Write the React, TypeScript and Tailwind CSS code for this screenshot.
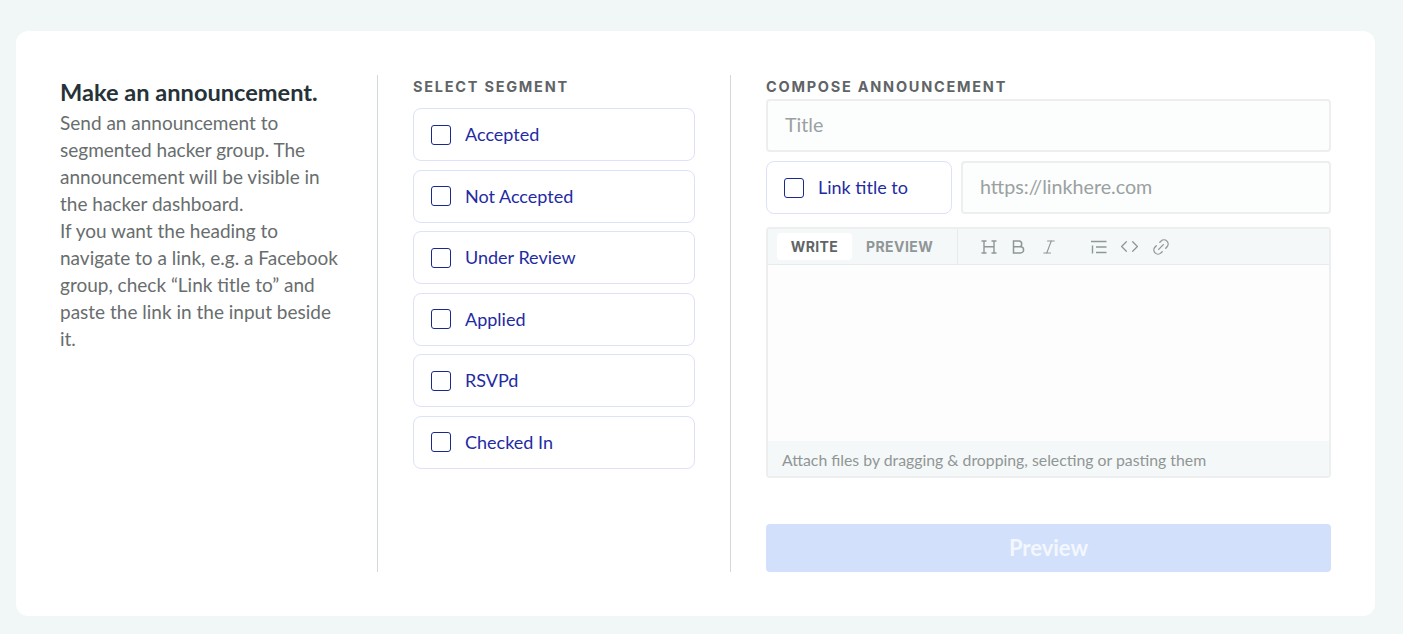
import { Code, Italic, Link2 } from "lucide-react";

const SEGMENTS = ["Accepted", "Not Accepted", "Under Review", "Applied", "RSVPd", "Checked In"];

const bodyFont = "font-['Lato','Noto_Sans',sans-serif]";

function CheckRow({ label, className }: { label: string; className: string }) {
  return (
    <label className={`flex h-[53px] shrink-0 items-center rounded-lg border border-[#dde2f7] bg-white pl-[17px] ${className}`}>
      <span className="h-5 w-5 rounded-[3px] border border-[#1a2a8c]" />
      <span className="ml-[14px] text-[18px] text-[#1f2ba3]">{label}</span>
    </label>
  );
}

function SectionLabel({ children }: { children: string }) {
  return (
    <h2 className="h-6 shrink-0 font-['Inter',sans-serif] text-[14.5px] leading-6 font-bold tracking-[1.75px] text-[#5f6566]">
      {children}
    </h2>
  );
}

function TextField({ placeholder, className }: { placeholder: string; className: string }) {
  return (
    <div className={`flex h-[53px] shrink-0 items-center rounded border-2 border-[#eceeef] bg-[#fcfdfd] pb-[2px] pl-[17px] text-[19.7px] text-[#9aa1a1] ${className}`}>
      {placeholder}
    </div>
  );
}

function HeadingIcon() {
  return (
    <svg width="16" height="14" viewBox="0 0 16 14" fill="none" stroke="currentColor" strokeWidth="1.4">
      <path d="M3 1v12M13 1v12M3 6.8h10M.5 1h5M10.5 1h5M.5 13h5M10.5 13h5" />
    </svg>
  );
}

function BoldIcon() {
  return (
    <svg width="13" height="14" viewBox="0 0 13 14" fill="none" stroke="currentColor" strokeWidth="1.5">
      <path d="M1.5 1h6a3 3 0 0 1 0 5.8h-6zM1.5 6.8h7a3.1 3.1 0 0 1 0 6.2h-7z" />
    </svg>
  );
}

function ListIcon() {
  return (
    <svg width="17" height="14" viewBox="0 0 17 14" fill="none" stroke="currentColor" strokeWidth="1.4">
      <path d="M1 1.5h15.5M6 7h10.5M6 12.5h10.5M2.5 5.5v8" />
    </svg>
  );
}

export default function App() {
  return (
    <div className={`h-[634px] bg-[#f1f6f6] px-4 pt-[31px] ${bodyFont}`}>
      <div className="flex h-[585px] w-[1359px] rounded-xl bg-white p-[44px]">
        <section className="w-[318px] border-r border-[#d3d8dc]">
          <h1 className="text-[23.6px] leading-[34px] font-bold whitespace-nowrap text-[#263238]">Make an announcement.</h1>
          <p className="text-[19px] leading-[27px] whitespace-nowrap text-[#686d6e]">
            Send an announcement to
            <br />
            segmented hacker group. The
            <br />
            announcement will be visible in
            <br />
            the hacker dashboard.
            <br />
            If you want the heading to
            <br />
            navigate to a link, e.g. a Facebook
            <br />
            group, check “Link title to” and
            <br />
            paste the link in the input beside
            <br />
            it.
          </p>
        </section>

        <section className="w-[353px] border-r border-[#d3d8dc] pl-[35px]">
          <SectionLabel>SELECT SEGMENT</SectionLabel>
          <div className="mt-[9px] flex flex-col gap-[8.5px]">
            {SEGMENTS.map((s) => (
              <CheckRow key={s} label={s} className="w-[282px]" />
            ))}
          </div>
        </section>

        <section className="flex w-[600px] flex-col pl-[35px]">
          <SectionLabel>COMPOSE ANNOUNCEMENT</SectionLabel>
          <TextField placeholder="Title" className="" />
          <div className="mt-[9px] flex shrink-0 gap-[9px]">
            <CheckRow label="Link title to" className="w-[186px]" />
            <TextField placeholder="https://linkhere.com" className="flex-1" />
          </div>
          <div className="mt-[13px] flex h-[251px] shrink-0 flex-col rounded border-2 border-[#eceeef] bg-[#fdfdfd]">
            <div className="flex h-[36px] shrink-0 items-stretch border-b border-[#e8ebeb] bg-[#f5f8f8]">
              <div className="flex w-[190px] items-center border-r border-[#e8ebeb] pl-[9px]">
                <span className="flex h-[27px] w-[75px] items-center justify-center rounded bg-white font-['Inter',sans-serif] text-[14px] font-bold tracking-[0.03em] text-[#5f6566]">
                  WRITE
                </span>
                <span className="ml-[14px] font-['Inter',sans-serif] text-[14px] font-bold tracking-[0.03em] text-[#8f9696]">
                  PREVIEW
                </span>
              </div>
              <div className="flex items-center pl-[23px] text-[#8f9696]">
                <HeadingIcon />
                <span className="ml-[15px]">
                  <BoldIcon />
                </span>
                <Italic size={18} strokeWidth={1.5} className="ml-[15px]" />
                <span className="ml-[32px]">
                  <ListIcon />
                </span>
                <Code size={19} strokeWidth={1.6} className="ml-[13px]" />
                <Link2 size={20} strokeWidth={1.6} className="ml-[12px] -rotate-45" />
              </div>
            </div>
            <div className="flex-1" />
            <div className="flex h-[35px] shrink-0 items-center bg-[#f5f8f8] pt-[3px] pl-[14px] text-[15.8px] text-[#8f9696]">
              Attach files by dragging &amp; dropping, selecting or pasting them
            </div>
          </div>
          <button
            type="button"
            className="mt-[46px] h-[48px] shrink-0 rounded bg-[#d2e0fc] pb-[2px] text-[22px] font-bold text-[#f3f7fe]"
          >
            Preview
          </button>
        </section>
      </div>
    </div>
  );
}
